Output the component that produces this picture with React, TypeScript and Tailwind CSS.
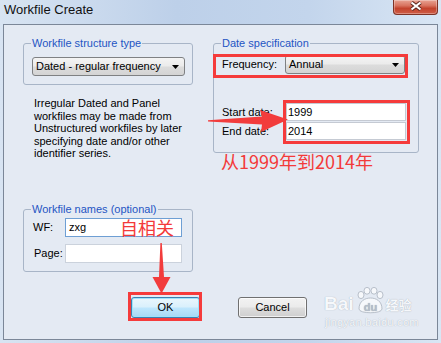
import type { ReactNode } from 'react';

const panelBg = 'bg-[#e4eaf3]';

function Group({ title, className, children }: { title: string; className?: string; children: ReactNode }) {
  return (
    <div className={`relative rounded-[3px] border border-[#a8b5c7] ${className ?? ''}`}>
      <span className={`absolute -top-[8px] left-[7px] ${panelBg} px-[1px] text-[11px] leading-[14px] text-[#1f55c3]`}>
        {title}
      </span>
      {children}
    </div>
  );
}

function Dropdown({ value, className }: { value: string; className?: string }) {
  return (
    <div
      className={`flex h-[19px] items-center justify-between rounded-[3px] border border-[#7f8183] bg-[linear-gradient(180deg,#f4f4f4_0%,#ebebeb_48%,#dcdcdc_52%,#d4d4d4_100%)] pl-[3px] pr-[5px] ${className ?? ''}`}
    >
      <span className="leading-[17px]">{value}</span>
      <svg width="7" height="4" viewBox="0 0 7 4">
        <path d="M0 0 H7 L3.5 4 Z" fill="#000" />
      </svg>
    </div>
  );
}

function CloseButton() {
  return (
    <div className="flex h-[15px] w-[45px] items-start justify-center rounded-b-[4px] border border-t-0 border-[#7e3326] bg-[linear-gradient(180deg,#e8a393_0%,#d8735f_40%,#c3432d_60%,#cf5e47_100%)] pt-[1px] shadow-[inset_0_0_0_1px_rgba(255,255,255,0.3)]">
      <svg width="14" height="10" viewBox="0 0 14 10">
        <path d="M2.5 1.5 L11.5 8.5 M11.5 1.5 L2.5 8.5" stroke="#5a261d" strokeWidth="4" />
        <path d="M2.5 1.5 L11.5 8.5 M11.5 1.5 L2.5 8.5" stroke="#ffffff" strokeWidth="2.2" />
      </svg>
    </div>
  );
}

export default function App() {
  return (
    <div className="relative h-[343px] w-[441px] overflow-hidden bg-[linear-gradient(90deg,#d8e4f2_0%,#bdd0e9_40%,#c3d5ec_70%,#d9e6f4_100%)] font-['Liberation_Sans',Arial,sans-serif] text-[11px] text-black">
      {/* title bar */}
      <div className="flex h-[24px] items-start justify-between pl-[4px] pr-[3px]">
        <span className="pt-[2px] text-[13px] leading-[15px] text-[#111]">Workfile Create</span>
        <CloseButton />
      </div>

      {/* dialog body */}
      <div className={`mx-[3px] h-[316px] border border-[#7b8798] ${panelBg}`}>
        <div className="flex gap-[20px] pl-[19px] pt-[18px]">
          {/* left column */}
          <div className="flex w-[170px] flex-col">
            <Group title="Workfile structure type" className="h-[42px] pl-[8px] pr-[7px] pt-[13px]">
              <Dropdown value="Dated - regular frequency" />
            </Group>

            <p className="mt-[12px] h-[63px] pl-[11px] leading-[12.5px]">
              Irregular Dated and Panel
              <br />
              workfiles may be made from
              <br />
              Unstructured workfiles by later
              <br />
              specifying date and/or other
              <br />
              identifier series.
            </p>

            <Group title="Workfile names (optional)" className="mt-[49px] pb-[8px] pl-[9px] pt-[8px]">
              <div className="flex flex-col gap-[7px]">
                <div className="flex items-center">
                  <span className="w-[32px]">WF:</span>
                  <div className="flex h-[19px] w-[117px] items-center justify-between border border-[#6e9fd4] bg-white pl-[3px] pr-[7px]">
                    <span>zxg</span>
                    <span className="font-['Noto_Sans_CJK_SC',sans-serif] text-[18px] leading-[19px] text-[#f33a3a]">
                      自相关
                    </span>
                  </div>
                </div>
                <div className="flex items-center">
                  <span className="w-[32px] pl-[1px]">Page:</span>
                  <div className="h-[19px] w-[117px] border border-[#cbd2dc] bg-white" />
                </div>
              </div>
            </Group>
          </div>

          {/* right column */}
          <div className="flex w-[206px] flex-col">
            <Group title="Date specification" className="h-[110px] pl-[8px] pt-[11px]">
              <div className="flex items-center">
                <span className="w-[63px]">Frequency:</span>
                <Dropdown value="Annual" className="w-[120px]" />
              </div>
              <div className="mt-[29px] flex flex-col gap-[1px]">
                <div className="flex items-center">
                  <span className="w-[64px]">Start date:</span>
                  <div className="flex h-[18px] w-[120px] items-center border border-[#c5cad3] bg-white pl-[1px]">1999</div>
                </div>
                <div className="flex items-center">
                  <span className="w-[64px]">End date:</span>
                  <div className="flex h-[18px] w-[120px] items-center border border-[#c5cad3] bg-white pl-[1px]">2014</div>
                </div>
              </div>
            </Group>
            <div className="-mt-[1px] pl-[8px] font-['Noto_Sans_CJK_SC',sans-serif] text-[18px] leading-[18px] text-[#f33a3a]">
              从1999年到2014年
            </div>
          </div>
        </div>

        {/* buttons */}
        <div className="mt-[25px] flex gap-[38px] pl-[127px]">
          <button className="flex h-[21px] w-[69px] items-center justify-center rounded-[3px] border border-[#3c7fb1] bg-[linear-gradient(180deg,#eaf6fd_0%,#d9f0fc_48%,#bee6fd_52%,#a7d9f5_100%)] shadow-[inset_0_0_0_1px_#9ee3fb]">
            OK
          </button>
          <button className="flex h-[21px] w-[69px] items-center justify-center rounded-[3px] border border-[#707070] bg-[linear-gradient(180deg,#f2f2f2_0%,#ebebeb_48%,#dddddd_52%,#cfcfcf_100%)] shadow-[inset_0_0_0_1px_rgba(255,255,255,0.7)]">
            Cancel
          </button>
        </div>
      </div>

      {/* annotation boxes */}
      <div className="pointer-events-none absolute left-[213px] top-[54px] h-[24px] w-[195px] border-[3px] border-[#f53b3b]" />
      <div className="pointer-events-none absolute left-[283px] top-[100px] h-[44px] w-[127px] border-[3px] border-[#f53b3b]" />
      <div className="pointer-events-none absolute left-[128px] top-[292px] h-[29px] w-[74px] border-[3px] border-[#f53b3b]" />

      {/* annotation arrows */}
      <svg className="pointer-events-none absolute left-0 top-0" width="441" height="343" viewBox="0 0 441 343">
        <polygon points="208,120.2 262,116.5 260,110 288,119.5 261,132 262,124.5 208,121.6" fill="#f23c3c" />
        <polygon points="160.4,243 161.8,243 164,277 170.5,277 161.5,293.5 152.5,277 159,277" fill="#f23c3c" />
      </svg>

      {/* watermark */}
      <div className="pointer-events-none absolute left-[324px] top-[287px] flex flex-col text-[#f6f8fb] [text-shadow:0_0_1px_#9aa4b0]">
        <div className="flex items-end">
          <span className="text-[19px] font-bold leading-[22px]">Bai</span>
          <svg width="30" height="28" viewBox="0 0 30 28" className="mx-[1px]">
            <g fill="#f6f8fb" stroke="#aab3be" strokeWidth="0.8">
              <ellipse cx="6" cy="8" rx="3" ry="3.6" />
              <ellipse cx="12" cy="3.8" rx="3" ry="3.4" />
              <ellipse cx="19" cy="3.8" rx="3" ry="3.4" />
              <ellipse cx="25" cy="8" rx="3" ry="3.6" />
              <path d="M4 22 C4 14 10 11 15.5 11 C21 11 27 14 27 22 C27 27 4 27 4 22 Z" />
            </g>
            <text x="15.5" y="24" textAnchor="middle" fontSize="11" fontWeight="bold" fill="#b5bec9" fontFamily="Liberation Sans, Arial, sans-serif">
              du
            </text>
          </svg>
          <span className="font-['Noto_Sans_CJK_SC',sans-serif] text-[13px] font-bold leading-[20px]">经验</span>
        </div>
        <span className="mt-[1px] pl-[1px] text-[11px] leading-[12px] tracking-[0.3px]">jingyan.baidu.com</span>
      </div>
    </div>
  );
}
